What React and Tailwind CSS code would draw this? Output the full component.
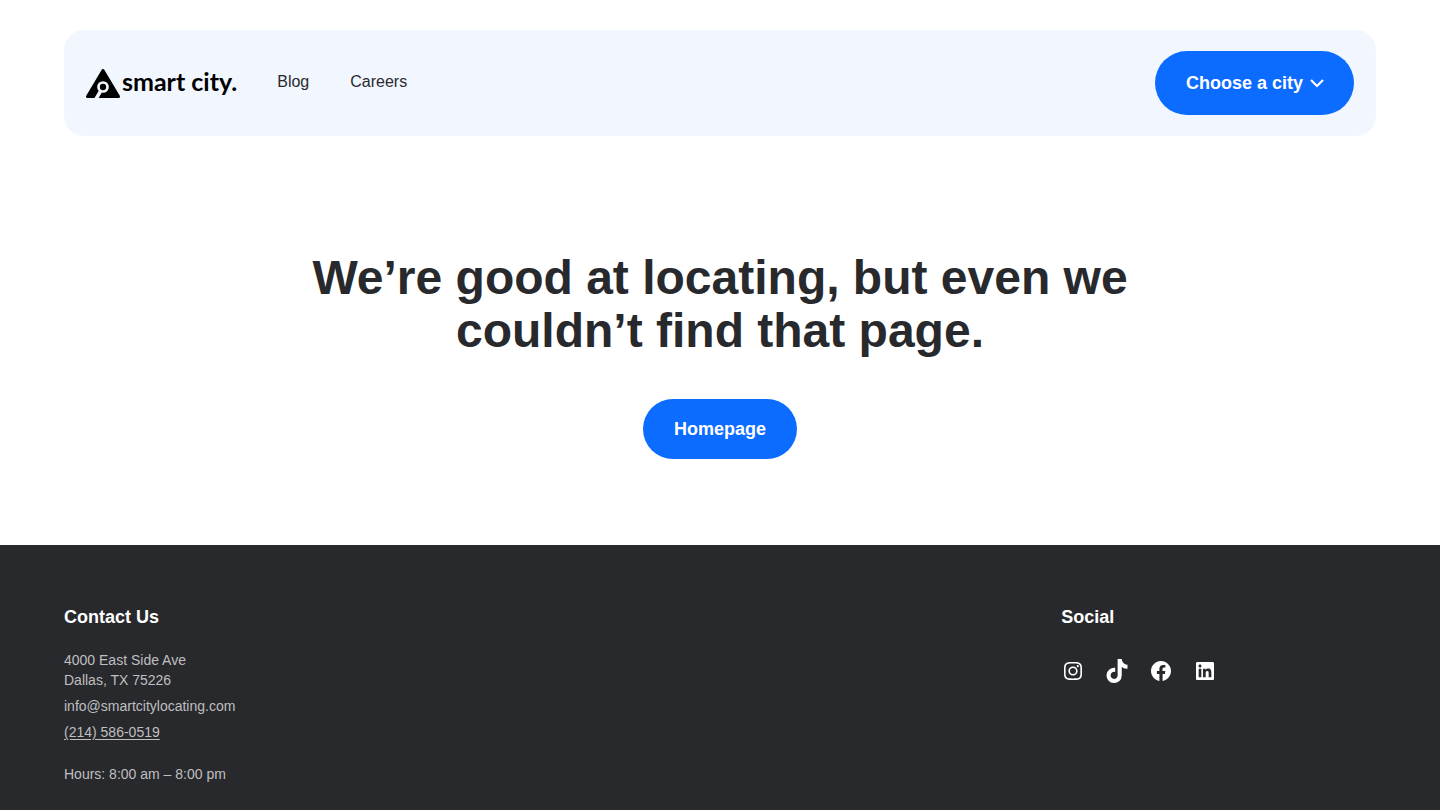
import { FaTiktok } from "react-icons/fa6";
import { SiInstagram } from "react-icons/si";

function LogoMark() {
  return (
    <svg viewBox="0 0 34 30" className="h-[30px] w-[34px]" aria-hidden="true">
      <path d="M17 2.5L1.5 28.5H32.5Z" fill="#000" stroke="#000" strokeWidth="3" strokeLinejoin="round" />
      <circle cx="17" cy="19" r="4.5" fill="#000" stroke="#f1f6ff" strokeWidth="2.7" />
      <path d="M14.3 23.6L10 31" fill="none" stroke="#f1f6ff" strokeWidth="3.6" />
    </svg>
  );
}

function Facebook() {
  return (
    <svg viewBox="0 0 24 24" className="size-6" fill="currentColor" aria-hidden="true">
      <path d="M12 2C6.5 2 2 6.5 2 12c0 5 3.7 9.1 8.4 9.9v-7H7.9V12h2.5V9.8c0-2.5 1.5-3.9 3.8-3.9 1.1 0 2.2.2 2.2.2v2.5h-1.3c-1.2 0-1.6.8-1.6 1.6V12h2.8l-.4 2.9h-2.3v7C18.3 21.1 22 17 22 12c0-5.5-4.5-10-10-10z" />
    </svg>
  );
}

function LinkedIn() {
  return (
    <svg viewBox="0 0 24 24" className="size-6" fill="currentColor" aria-hidden="true">
      <path d="M19.7,3H4.3C3.582,3,3,3.582,3,4.3v15.4C3,20.418,3.582,21,4.3,21h15.4c0.718,0,1.3-0.582,1.3-1.3V4.3 C21,3.582,20.418,3,19.7,3z M8.339,18.338H5.667v-8.59h2.672V18.338z M7.004,8.574c-0.857,0-1.549-0.694-1.549-1.548 c0-0.855,0.691-1.548,1.549-1.548c0.854,0,1.547,0.694,1.547,1.548C8.551,7.881,7.858,8.574,7.004,8.574z M18.339,18.338h-2.669 v-4.177c0-0.996-0.017-2.278-1.387-2.278c-1.389,0-1.601,1.086-1.601,2.206v4.249h-2.667v-8.59h2.559v1.174h0.037 c0.356-0.675,1.227-1.387,2.526-1.387c2.703,0,3.203,1.779,3.203,4.092V18.338z" />
    </svg>
  );
}

const socials = [
  { name: "Instagram", icon: <SiInstagram className="size-[18px]" /> },
  { name: "TikTok", icon: <FaTiktok className="size-6" /> },
  { name: "Facebook", icon: <Facebook /> },
  { name: "LinkedIn", icon: <LinkedIn /> },
];

export default function App() {
  return (
    <div className="flex min-h-screen flex-col bg-white font-['Liberation_Sans',Arial,sans-serif] text-[#28292d]">
      <header className="mx-16 mt-[30px] flex items-center justify-between rounded-[20px] bg-[#f1f6ff] px-[22px] py-[21px]">
        <div className="flex items-center gap-10">
          <a href="#" className="flex items-center gap-0.5 text-black">
            <LogoMark />
            <span className="pb-1 font-[Lato,sans-serif] text-[25px] leading-7 font-bold">smart city.</span>
          </a>
          <nav className="flex gap-[41px] pb-0.5 text-base">
            <a href="#">Blog</a>
            <a href="#">Careers</a>
          </nav>
        </div>
        <button type="button" className="flex h-16 items-center gap-[7px] rounded-full bg-[#0c6cff] pr-[30px] pl-[31px] text-lg font-bold text-white">
          Choose a city
          <svg viewBox="0 0 14 10" className="h-2.5 w-3.5" fill="none" stroke="currentColor" strokeWidth="2.2" aria-hidden="true">
            <path d="M1 2l6 6 6-6" />
          </svg>
        </button>
      </header>

      <main className="flex flex-col items-center px-16 pt-[115px] pb-[86px]">
        <h1 className="max-w-[860px] text-center text-5xl leading-[53px] font-bold">
          We’re good at locating, but even we couldn’t find that page.
        </h1>
        <a href="#" className="mt-[42px] flex h-[60px] items-center rounded-full bg-[#0c6cff] px-[31px] text-lg font-bold text-white">
          Homepage
        </a>
      </main>

      <footer className="flex grow justify-between bg-[#28292d] px-16 pt-[58px] pb-6 text-white">
        <section>
          <h2 className="text-lg font-bold">Contact Us</h2>
          <address className="mt-[19px] flex flex-col items-start gap-1.5 text-sm leading-5 text-[#bfbfc0] not-italic">
            <p>
              4000 East Side Ave
              <br />
              Dallas, TX 75226
            </p>
            <a href="mailto:info@smartcitylocating.com">info@smartcitylocating.com</a>
            <a href="tel:+12145860519" className="underline underline-offset-2">(214) 586-0519</a>
          </address>
          <p className="mt-[22px] text-sm leading-5 text-[#bfbfc0]">Hours: 8:00 am – 8:00 pm</p>
        </section>
        <section className="w-[24%]">
          <h2 className="text-lg font-bold">Social</h2>
          <ul className="mt-7 flex gap-5">
            {socials.map((s) => (
              <li key={s.name}>
                <a href="#" aria-label={s.name} className="flex size-6 items-center justify-center">
                  {s.icon}
                </a>
              </li>
            ))}
          </ul>
        </section>
      </footer>
    </div>
  );
}
